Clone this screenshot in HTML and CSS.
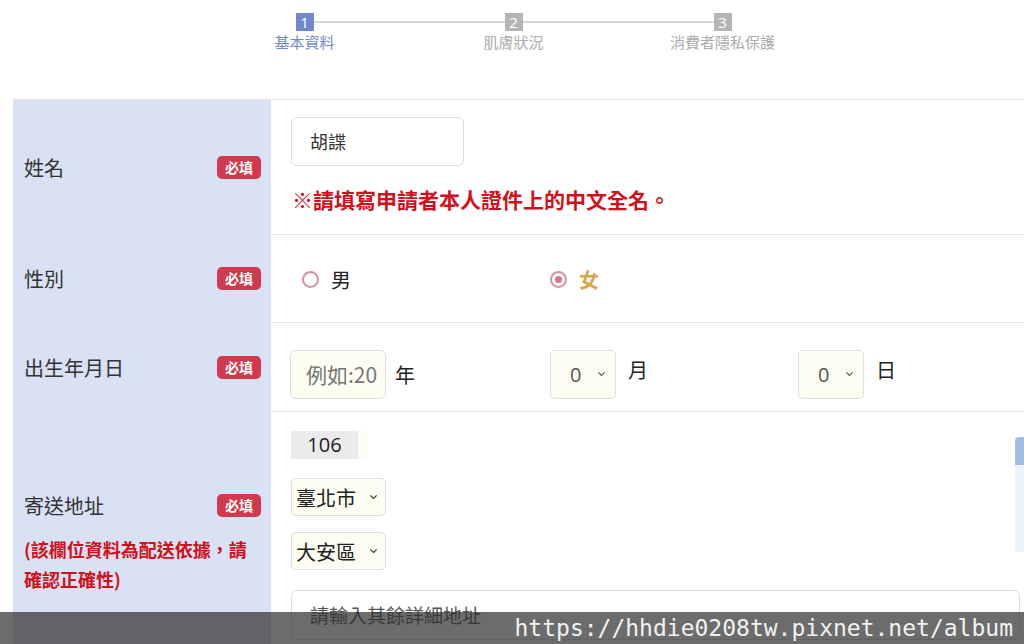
FILE: index.html
```html
<!DOCTYPE html>
<html lang="zh-Hant">
  <head>
    <meta charset="UTF-8" />
    <title>基本資料</title>
    <link rel="stylesheet" href="styles.css">
  </head>
  <body>
    <div id="page">
      <!-- Steps -->
      <div class="steps">
        <div class="step active">
          <div class="step-num">1</div>
          <div class="step-label">基本資料</div>
        </div>
        <div class="step">
          <div class="step-num">2</div>
          <div class="step-label">肌膚狀況</div>
        </div>
        <div class="step">
          <div class="step-num">3</div>
          <div class="step-label">消費者隱私保護</div>
        </div>
      </div>

      <!-- Form -->
      <div class="form">
        <div class="row row-name">
          <div class="label-cell">
            <span class="label">姓名</span>
            <span class="badge">必填</span>
          </div>
          <div class="field-cell">
            <div class="input name-input">胡諜</div>
            <div class="note">※請填寫申請者本人證件上的中文全名。</div>
          </div>
        </div>

        <div class="row row-gender">
          <div class="label-cell">
            <span class="label">性別</span>
            <span class="badge">必填</span>
          </div>
          <div class="field-cell gender">
            <label class="radio-item"><span class="radio"></span><span>男</span></label>
            <label class="radio-item checked"><span class="radio"></span><span class="picked">女</span></label>
          </div>
        </div>

        <div class="row row-birth">
          <div class="label-cell">
            <span class="label">出生年月日</span>
            <span class="badge">必填</span>
          </div>
          <div class="field-cell birth">
            <div class="birth-item">
              <div class="input year-input"><span class="placeholder">例如:20</span></div>
              <span class="unit">年</span>
            </div>
            <div class="birth-item">
              <div class="select num-select">0
                <svg viewBox="0 0 10 6" width="9" height="6"><path d="M1.5 1.2 5 4.6 8.5 1.2" fill="none" stroke="#555" stroke-width="1.3"/></svg>
              </div>
              <span class="unit up">月</span>
            </div>
            <div class="birth-item">
              <div class="select num-select">0
                <svg viewBox="0 0 10 6" width="9" height="6"><path d="M1.5 1.2 5 4.6 8.5 1.2" fill="none" stroke="#555" stroke-width="1.3"/></svg>
              </div>
              <span class="unit up">日</span>
            </div>
          </div>
        </div>

        <div class="row row-address">
          <div class="label-cell address-label">
            <div class="label-line">
              <span class="label">寄送地址</span>
              <span class="badge">必填</span>
            </div>
            <div class="address-note">(該欄位資料為配送依據，請確認正確性)</div>
          </div>
          <div class="field-cell address">
            <div class="zip">106</div>
            <div class="select city-select">臺北市
              <svg viewBox="0 0 10 6" width="9" height="6"><path d="M1.5 1.2 5 4.6 8.5 1.2" fill="none" stroke="#333" stroke-width="1.3"/></svg>
            </div>
            <div class="select city-select">大安區
              <svg viewBox="0 0 10 6" width="9" height="6"><path d="M1.5 1.2 5 4.6 8.5 1.2" fill="none" stroke="#333" stroke-width="1.3"/></svg>
            </div>
            <div class="input detail-input">請輸入其餘詳細地址</div>
          </div>
        </div>
      </div>

      <div class="side-tab"></div>
      <div class="watermark">https://hhdie0208tw.pixnet.net/album</div>
    </div>
  </body>
</html>
```

FILE: styles.css
```css
body {
  margin: 0;
  padding: 0;
  overflow: hidden;
  background: #fff;
  font-family: "Noto Sans CJK TC", "Noto Sans", sans-serif;
  color: #333;
}

#page {
  width: 1024px;
  height: 644px;
  position: relative;
  overflow: hidden;
}

/* Steps */
.steps {
  position: relative;
  display: flex;
  width: 627px;
  height: 99px;
  margin-left: 200px;
  padding-top: 13px;
  box-sizing: border-box;
}

.steps::before {
  content: "";
  position: absolute;
  top: 21px;
  left: 105px;
  right: 105px;
  height: 2px;
  background: #d6d6d6;
}

.step {
  position: relative;
  width: 209px;
  display: flex;
  flex-direction: column;
  align-items: center;
}

.step-num {
  width: 18px;
  height: 18px;
  background: #b5b5b5;
  color: #fff;
  font-size: 15px;
  line-height: 18px;
  text-align: center;
  font-family: "Open Sans", sans-serif;
}

.step-label {
  margin-top: 0;
  font-size: 15px;
  line-height: 21px;
  color: #ababab;
}

.step.active .step-num {
  background: #7189cc;
}

.step.active .step-label {
  color: #7189cc;
}

/* Form */
.form {
  margin-left: 13px;
  border-top: 1px solid #e6e8ec;
}

.row {
  display: flex;
  border-bottom: 1px solid #e3e6eb;
}

.label-cell {
  width: 258px;
  flex-shrink: 0;
  box-sizing: border-box;
  background: #d9e1f4;
  padding: 0 10px 0 11px;
  display: flex;
  align-items: center;
  justify-content: space-between;
}

.label {
  font-size: 20px;
  color: #333;
}

.badge {
  background: #d13a4c;
  color: #fff;
  font-size: 14px;
  font-weight: bold;
  line-height: 23px;
  padding: 0 8px;
  border-radius: 5px;
}

.field-cell {
  flex: 1;
  padding-left: 20px;
}

.input {
  box-sizing: border-box;
  border: 1px solid #dcdcdc;
  border-radius: 6px;
  font-size: 18px;
  color: #333;
}

.select {
  box-sizing: border-box;
  border: 1px solid #dedede;
  border-radius: 5px;
  background: #fdfdf1;
  display: flex;
  align-items: center;
  justify-content: space-between;
}

/* Name */
.row-name {
  height: 134px;
}

.row-name .field-cell {
  padding-top: 17px;
}

.name-input {
  width: 173px;
  height: 49px;
  line-height: 47px;
  padding-left: 18px;
}

.note {
  margin-top: 19px;
  padding-left: 1px;
  font-size: 21px;
  font-weight: bold;
  color: #d0101a;
  line-height: 28px;
}

/* Gender */
.row-gender {
  height: 87px;
}

.gender {
  display: flex;
  align-items: center;
  padding-left: 31px;
  padding-top: 1px;
}

.radio-item {
  width: 248px;
  display: flex;
  align-items: center;
  font-size: 20px;
  color: #222;
}

.radio {
  width: 13px;
  height: 13px;
  border: 2px solid #d6929f;
  border-radius: 50%;
  margin-right: 12px;
  position: relative;
}

.radio-item.checked .radio::after {
  content: "";
  position: absolute;
  top: 3px;
  left: 3px;
  width: 7px;
  height: 7px;
  border-radius: 50%;
  background: #d47789;
}

.picked {
  color: #dba650;
  font-weight: bold;
}

/* Birthday */
.row-birth {
  height: 88px;
}

.birth {
  display: flex;
  align-items: center;
  padding-left: 19px;
  padding-top: 14px;
}

.birth-item {
  display: flex;
  align-items: center;
}

.birth-item:first-child {
  width: 260px;
}

.birth-item:nth-child(2) {
  width: 248px;
}

.year-input {
  width: 96px;
  height: 49px;
  line-height: 47px;
  padding: 0 4px 0 15px;
  background: #fdfdf1;
  color: #777;
  font-size: 21px;
}

.placeholder {
  display: block;
  overflow: hidden;
  white-space: nowrap;
}

.num-select {
  width: 66px;
  height: 49px;
  padding: 0 9px 0 19px;
  font-size: 20px;
  color: #555;
  font-family: "Open Sans", sans-serif;
}

.unit {
  margin-left: 9px;
  font-size: 20px;
  color: #222;
}

.unit.up {
  margin-left: 12px;
  margin-top: -9px;
}

/* Address */
.row-address {
  height: 260px;
}

.address-label {
  flex-direction: column;
  align-items: stretch;
  justify-content: flex-start;
  padding-top: 79px;
}

.label-line {
  display: flex;
  justify-content: space-between;
  align-items: center;
}

.address-note {
  margin-top: 14px;
  font-size: 18px;
  font-weight: bold;
  line-height: 30px;
  color: #d0101a;
}

.address {
  padding-top: 19px;
  padding-right: 4px;
}

.zip {
  width: 67px;
  height: 28px;
  line-height: 28px;
  background: #ebebeb;
  box-shadow: 9px 0 0 #fdfdf3;
  text-align: center;
  font-size: 20px;
  color: #222;
  font-family: "Open Sans", sans-serif;
}

.city-select {
  width: 95px;
  height: 38px;
  margin-top: 19px;
  padding: 0 7px 0 4px;
  font-size: 20px;
  color: #222;
}

.city-select + .city-select {
  margin-top: 16px;
}

.detail-input {
  margin-top: 20px;
  height: 50px;
  line-height: 48px;
  padding-left: 18px;
  font-size: 19px;
  color: #555;
}

/* Overlays */
.side-tab {
  position: absolute;
  right: 0;
  top: 437px;
  width: 9px;
  height: 115px;
  border-radius: 4px 0 0 4px;
  background: linear-gradient(#a3bce3 0, #a3bce3 28px, #eef3fb 28px);
}

.watermark {
  position: absolute;
  left: 0;
  right: 0;
  bottom: 0;
  height: 32px;
  background: rgba(45, 45, 45, 0.7);
  color: #f2f2f2;
  font-family: "DejaVu Sans Mono", monospace;
  font-size: 23px;
  line-height: 32px;
  text-align: right;
  padding-right: 11px;
}
```
